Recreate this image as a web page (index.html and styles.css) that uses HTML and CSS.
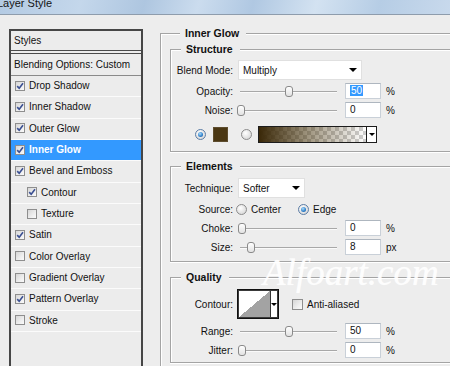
FILE: index.html
```html
<!DOCTYPE html>
<html>
<head>
<meta charset="utf-8">
<title>Layer Style</title>
<link rel="stylesheet" href="styles.css">
</head>
<body>
<div class="titlebar"><div class="title-text">Layer Style</div></div>
<div class="main">
  <div class="styles-panel">
    <div class="sp-head">Styles</div>
    <div class="sp-blend">Blending Options: Custom</div>
    <div class="sp-row"><span class="cb"><svg width="8" height="8" viewBox="0 0 8 8"><path d="M1.2 4.1 L3.2 6.3 L7 1.3" fill="none" stroke="#3a4f92" stroke-width="1.6"/></svg></span>Drop Shadow</div>
    <div class="sp-row"><span class="cb"><svg width="8" height="8" viewBox="0 0 8 8"><path d="M1.2 4.1 L3.2 6.3 L7 1.3" fill="none" stroke="#3a4f92" stroke-width="1.6"/></svg></span>Inner Shadow</div>
    <div class="sp-row"><span class="cb"><svg width="8" height="8" viewBox="0 0 8 8"><path d="M1.2 4.1 L3.2 6.3 L7 1.3" fill="none" stroke="#3a4f92" stroke-width="1.6"/></svg></span>Outer Glow</div>
    <div class="sp-row active"><span class="cb"><svg width="8" height="8" viewBox="0 0 8 8"><path d="M1.2 4.1 L3.2 6.3 L7 1.3" fill="none" stroke="#3a4f92" stroke-width="1.6"/></svg></span>Inner Glow</div>
    <div class="sp-row"><span class="cb"><svg width="8" height="8" viewBox="0 0 8 8"><path d="M1.2 4.1 L3.2 6.3 L7 1.3" fill="none" stroke="#3a4f92" stroke-width="1.6"/></svg></span>Bevel and Emboss</div>
    <div class="sp-row indent"><span class="cb"><svg width="8" height="8" viewBox="0 0 8 8"><path d="M1.2 4.1 L3.2 6.3 L7 1.3" fill="none" stroke="#3a4f92" stroke-width="1.6"/></svg></span>Contour</div>
    <div class="sp-row indent"><span class="cb"></span>Texture</div>
    <div class="sp-row"><span class="cb"><svg width="8" height="8" viewBox="0 0 8 8"><path d="M1.2 4.1 L3.2 6.3 L7 1.3" fill="none" stroke="#3a4f92" stroke-width="1.6"/></svg></span>Satin</div>
    <div class="sp-row"><span class="cb"></span>Color Overlay</div>
    <div class="sp-row"><span class="cb"></span>Gradient Overlay</div>
    <div class="sp-row"><span class="cb"><svg width="8" height="8" viewBox="0 0 8 8"><path d="M1.2 4.1 L3.2 6.3 L7 1.3" fill="none" stroke="#3a4f92" stroke-width="1.6"/></svg></span>Pattern Overlay</div>
    <div class="sp-row"><span class="cb"></span>Stroke</div>
  </div>

  <div class="settings">
    <div class="group outer">
      <div class="gtitle">Inner Glow</div>

      <div class="group sub structure">
        <div class="gtitle">Structure</div>
        <div class="row blend-row">
          <span class="lbl">Blend Mode:</span>
          <div class="select blend-select"><span>Multiply</span><span class="arrow"></span></div>
        </div>
        <div class="row slider-row">
          <span class="lbl">Opacity:</span>
          <div class="slider"><span class="thumb" style="left:45px"></span></div>
          <div class="num"><span class="sel">50</span></div><span class="unit">%</span>
        </div>
        <div class="row slider-row">
          <span class="lbl">Noise:</span>
          <div class="slider"><span class="thumb" style="left:-3px"></span></div>
          <div class="num">0</div><span class="unit">%</span>
        </div>
        <div class="row color-row">
          <span class="radio on"></span>
          <span class="swatch"></span>
          <span class="radio gap-radio"></span>
          <div class="gradbox"><span class="grad"></span><span class="garrow"><span class="arrow small"></span></span></div>
        </div>
      </div>

      <div class="group sub elements">
        <div class="gtitle">Elements</div>
        <div class="row tech-row">
          <span class="lbl">Technique:</span>
          <div class="select tech-select"><span>Softer</span><span class="arrow"></span></div>
        </div>
        <div class="row source-row">
          <span class="lbl">Source:</span>
          <span class="radio src-radio"></span><span class="rtext">Center</span>
          <span class="radio on src-radio2"></span><span class="rtext">Edge</span>
        </div>
        <div class="row slider-row">
          <span class="lbl">Choke:</span>
          <div class="slider"><span class="thumb" style="left:-2px"></span></div>
          <div class="num">0</div><span class="unit">%</span>
        </div>
        <div class="row slider-row">
          <span class="lbl">Size:</span>
          <div class="slider"><span class="thumb" style="left:7px"></span></div>
          <div class="num">8</div><span class="unit">px</span>
        </div>
      </div>

      <div class="group sub quality">
        <div class="gtitle">Quality</div>
        <div class="row contour-row">
          <span class="lbl">Contour:</span>
          <div class="contour"><span class="cthumb"></span><span class="carrow"><span class="arrow small"></span></span></div>
          <span class="cb aa"></span><span class="rtext">Anti-aliased</span>
        </div>
        <div class="row slider-row">
          <span class="lbl">Range:</span>
          <div class="slider"><span class="thumb" style="left:45px"></span></div>
          <div class="num">50</div><span class="unit">%</span>
        </div>
        <div class="row slider-row">
          <span class="lbl">Jitter:</span>
          <div class="slider"><span class="thumb" style="left:-2px"></span></div>
          <div class="num">0</div><span class="unit">%</span>
        </div>
      </div>
    </div>
  </div>
</div>
<div class="watermark">Alfoart.com</div>
</body>
</html>
```

FILE: styles.css
```css
* { box-sizing: border-box; }
html, body { margin: 0; padding: 0; }
body {
  width: 450px;
  height: 366px;
  overflow: hidden;
  position: relative;
  background: #ededed;
  font-family: "Liberation Sans", Arial, sans-serif;
  font-size: 10px;
  color: #111;
}

/* title bar */
.titlebar {
  height: 15px;
  overflow: hidden;
  border-bottom: 1px solid #8e9cac;
  background: linear-gradient(105deg, #b3cae3 0%, #c4d7eb 18%, #aec6e0 32%, #cbdcee 44%, #b0c8e2 56%, #d3e2f1 70%, #b6cde5 84%, #c8d9ec 100%);
}
.title-text {
  font-size: 11px;
  line-height: 12px;
  margin-top: -3px;
  margin-left: -3px;
  color: #151515;
  white-space: nowrap;
}

.main {
  display: flex;
  align-items: flex-start;
  padding-left: 9px;
  height: 351px;
  overflow: hidden;
}

/* styles list */
.styles-panel {
  flex: none;
  width: 134px;
  height: 337px;
  margin-top: 14px;
  border: 2px solid #464646;
  border-bottom: 0;
  background: #ececec;
}
.sp-head {
  height: 20px;
  line-height: 19px;
  padding-left: 3px;
  border-bottom: 1px solid #4a4a4a;
}
.sp-blend {
  height: 23px;
  margin-top: 2px;
  line-height: 21px;
  padding-left: 3px;
  border-top: 1px solid #4a4a4a;
  border-bottom: 1px solid #8a8a8a;
  white-space: nowrap;
}
.sp-row {
  height: 21.33px;
  display: flex;
  align-items: center;
  gap: 4px;
  padding-left: 4px;
  padding-bottom: 1px;
  border-bottom: 1px solid #fbfbfb;
  white-space: nowrap;
}
.sp-row.indent { padding-left: 16px; }
.sp-row.active {
  background: #3399ff;
  color: #fff;
  font-weight: bold;
}

.cb {
  flex: none;
  width: 10px;
  height: 10px;
  border: 1px solid #8e8e8e;
  background: linear-gradient(135deg, #d6d6d6 0%, #eeeeee 60%, #fafafa 100%);
  display: flex;
  align-items: center;
  justify-content: center;
}
.cb svg { display: block; }

/* settings side */
.settings {
  flex: none;
  width: 290px;
  margin-left: 17px;
  margin-top: 18px;
}
.group {
  border: 1px solid #a4a4a4;
  box-shadow: inset 1px 1px 0 #fff;
}
.gtitle {
  width: fit-content;
  height: 13px;
  line-height: 13px;
  margin: -7px 0 0 10px;
  padding: 0 7px 0 5px;
  background: #ededed;
  font-weight: bold;
  font-size: 10.5px;
  color: #111;
}
.outer {
  height: 333px;
  padding-left: 9px;
  border-right: 0;
  border-bottom: 0;
}
.sub {
  width: 280px;
  margin-top: 9px;
  border-right: 0;
  box-shadow: inset 1px 1px 0 #fff, 0 1px 0 #fff;
}
.structure { padding-bottom: 7px; }
.elements { margin-top: 14px; padding-bottom: 5px; }
.quality { margin-top: 15px; padding-bottom: 3px; }

.row {
  display: flex;
  align-items: center;
  white-space: nowrap;
}
.lbl {
  flex: none;
  width: 62px;
  text-align: right;
}
.blend-row { height: 20px; margin-top: 4px; }
.slider-row { height: 18px; margin-top: 1px; }
.blend-row + .slider-row { margin-top: 2px; }
.color-row { height: 19px; margin-top: 6px; padding-left: 24px; }
.tech-row { height: 20px; margin-top: 5px; }
.source-row { height: 17px; margin-top: 3px; }
.contour-row { height: 30px; margin-top: 5px; }
.contour-row + .slider-row { margin-top: 3px; }

/* dropdown */
.select {
  height: 20px;
  margin-left: 5px;
  padding: 0 4px 0 4px;
  background: #fff;
  border: 1px solid #e0e0e0;
  display: flex;
  align-items: center;
  justify-content: space-between;
}
.blend-select { width: 124px; }
.tech-select { width: 67px; }
.arrow {
  width: 0;
  height: 0;
  border-left: 4px solid transparent;
  border-right: 4px solid transparent;
  border-top: 4px solid #000;
}
.arrow.small {
  border-left-width: 3px;
  border-right-width: 3px;
  border-top-width: 3px;
}

/* slider */
.slider {
  flex: none;
  position: relative;
  width: 97px;
  height: 11px;
  margin-left: 7px;
}
.slider::before {
  content: "";
  position: absolute;
  left: 0;
  right: 0;
  top: 5px;
  height: 1px;
  background: #a8a8a8;
  box-shadow: 0 1px 0 #fafafa;
}
.thumb {
  position: absolute;
  top: 0;
  width: 8px;
  height: 11px;
  border: 1px solid #8a8a8a;
  border-radius: 3px;
  background: linear-gradient(#ffffff, #e2e2e2);
}

/* number field */
.num {
  flex: none;
  width: 36px;
  height: 16px;
  margin-left: 8px;
  padding-left: 4px;
  line-height: 14px;
  background: #fff;
  border: 1px solid #c9d0d8;
  border-top-color: #aeb6bf;
}
.sel {
  background: #3399ff;
  color: #fff;
  padding: 0 1px;
}
.unit { margin-left: 5px; }

/* radio */
.radio {
  flex: none;
  width: 11px;
  height: 11px;
  border-radius: 50%;
  border: 1px solid #8c8c8c;
  background: radial-gradient(circle at 40% 35%, #ffffff 0%, #e4e4e4 55%, #cfcfcf 100%);
  display: flex;
  align-items: center;
  justify-content: center;
}
.radio.on::after {
  content: "";
  width: 5px;
  height: 5px;
  border-radius: 50%;
  background: radial-gradient(circle at 40% 35%, #a9dcfb 0%, #2f7fc9 60%, #1a4f8e 100%);
}
.radio.on { border-color: #5c7da6; }
.gap-radio { margin-left: 13px; }
.src-radio { margin-left: 3px; }
.src-radio2 { margin-left: 17px; }
.rtext { margin-left: 4px; }

.swatch {
  flex: none;
  width: 15px;
  height: 15px;
  margin-left: 7px;
  background: #4a3713;
  border: 1px solid #5e4d2e;
}

.gradbox {
  flex: none;
  display: flex;
  width: 119px;
  height: 17px;
  margin-left: 6px;
  border: 1px solid #1c1c1c;
}
.grad {
  flex: 1;
  background:
    linear-gradient(to right, rgba(58,40,8,1) 0%, rgba(77,58,18,0.55) 45%, rgba(77,58,18,0) 100%),
    linear-gradient(45deg, #cfcfcf 25%, transparent 25%, transparent 75%, #cfcfcf 75%),
    linear-gradient(45deg, #cfcfcf 25%, transparent 25%, transparent 75%, #cfcfcf 75%),
    #ffffff;
  background-size: 100% 100%, 8px 8px, 8px 8px, auto;
  background-position: 0 0, 0 0, 4px 4px, 0 0;
}
.garrow {
  flex: none;
  width: 10px;
  border-left: 1px solid #1c1c1c;
  background: #fff;
  display: flex;
  align-items: center;
  justify-content: center;
}

/* contour */
.contour {
  flex: none;
  display: flex;
  width: 42px;
  height: 30px;
  margin-left: 4px;
  border: 1px solid #111;
  box-shadow: inset 0 0 0 1px #3a3a3a;
}
.cthumb {
  flex: none;
  width: 31px;
  margin: 1px 0 1px 1px;
  background: linear-gradient(to top left, #a3a3a3 50%, #ffffff 50%);
}
.carrow {
  flex: 1;
  border-left: 1px solid #333;
  margin: 1px 1px 1px 0;
  background: #fff;
  display: flex;
  align-items: center;
  justify-content: center;
}
.cb.aa {
  width: 11px;
  height: 11px;
  margin-left: 13px;
}

/* watermark */
.watermark {
  position: absolute;
  left: 263px;
  top: 254px;
  font-family: "Liberation Serif", "Times New Roman", serif;
  font-style: italic;
  font-size: 37px;
  line-height: 37px;
  color: rgba(255, 255, 255, 0.85);
  text-shadow: 0 0 1px rgba(255, 255, 255, 0.6);
  white-space: nowrap;
  pointer-events: none;
}
```
